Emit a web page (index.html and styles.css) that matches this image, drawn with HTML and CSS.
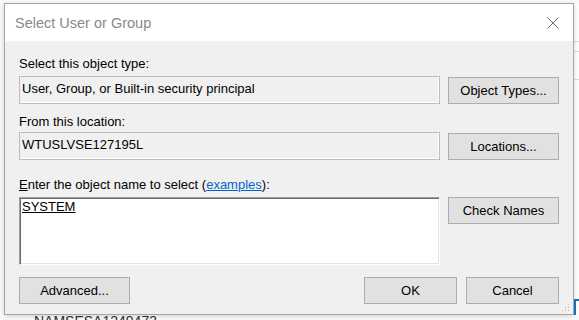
FILE: index.html
```html
<!DOCTYPE html>
<html lang="en">
<head>
    <meta charset="UTF-8">
    <title>Select User or Group</title>
    <link rel="stylesheet" href="styles.css">
</head>
<body>
    <div class="desktop">
        <div class="dialog">
            <div class="titlebar">
                <span class="title">Select User or Group</span>
                <svg class="close" viewBox="0 0 12 12" width="12" height="12">
                    <path d="M0.5 0.5 L11.5 11.5 M11.5 0.5 L0.5 11.5" stroke="#6e6e6e" stroke-width="1" fill="none"/>
                </svg>
            </div>
            <div class="content">
                <div class="label label-first">Select this object type:</div>
                <div class="row">
                    <div class="field">User, Group, or Built-in security principal</div>
                    <button class="btn">Object Types...</button>
                </div>

                <div class="label label-second">From this location:</div>
                <div class="row">
                    <div class="field">WTUSLVSE127195L</div>
                    <button class="btn">Locations...</button>
                </div>

                <div class="label label-third"><u>E</u>nter the object name to select (<a href="#">examples</a>):</div>
                <div class="row row-top">
                    <div class="names"><u>SYSTEM</u></div>
                    <button class="btn">Check Names</button>
                </div>

                <div class="footer">
                    <button class="btn">Advanced...</button>
                    <div class="footer-right">
                        <button class="btn btn-small">OK</button>
                        <button class="btn btn-small">Cancel</button>
                    </div>
                </div>
            </div>
            <svg class="grip" viewBox="0 0 8 8" width="8" height="8">
                <rect x="6" y="0" width="1" height="1" fill="#b8b8b8"/>
                <rect x="3" y="3" width="1" height="1" fill="#b8b8b8"/>
                <rect x="6" y="3" width="1" height="1" fill="#b8b8b8"/>
                <rect x="0" y="6" width="1" height="1" fill="#b8b8b8"/>
                <rect x="3" y="6" width="1" height="1" fill="#b8b8b8"/>
                <rect x="6" y="6" width="1" height="1" fill="#b8b8b8"/>
            </svg>
        </div>
        <div class="side">
            <div class="side-line side-line-a"></div>
            <div class="side-line side-line-b"></div>
            <div class="side-line side-line-c"></div>
            <div class="side-blue"></div>
        </div>
    </div>
    <div class="under">NAMSESA1249473</div>
</body>
</html>
```

FILE: styles.css
```css
body {
    margin: 0;
    padding: 3px 0 0 0;
    background: #fafafa;
    font-family: "Liberation Sans", Arial, sans-serif;
    font-size: 13px;
    color: #000;
    overflow: hidden;
    height: 320px;
    box-sizing: border-box;
}
.desktop {
    display: flex;
    padding-left: 4px;
}
.dialog {
    position: relative;
    width: 570px;
    height: 312px;
    box-sizing: border-box;
    border: 1px solid #a6a6a6;
    background: #f0f0f0;
    box-shadow: 0 1px 5px rgba(0, 0, 0, 0.18);
    z-index: 1;
}
.titlebar {
    height: 37px;
    background: #fff;
    display: flex;
    align-items: center;
    justify-content: space-between;
    padding: 0 14px 0 10px;
}
.title {
    font-size: 14.5px;
    color: #8a8a8a;
    letter-spacing: 0;
}
.close {
    display: block;
    margin-top: 1px;
}
.content {
    padding: 15px 14px 9px 14px;
}
.label {
    line-height: 16px;
    white-space: nowrap;
}
.label-first {
    margin-bottom: 4px;
}
.label-second {
    margin-top: 10px;
    margin-bottom: 2px;
}
.label-third {
    margin-top: 17px;
    margin-bottom: 4px;
}
.label a {
    color: #0066cc;
}
.row {
    display: grid;
    grid-template-columns: 421px 111px;
    column-gap: 8px;
    align-items: end;
}
.row-top {
    align-items: start;
}
.field {
    height: 28px;
    box-sizing: border-box;
    border: 1px solid #bcbcbc;
    box-shadow: inset -1px -1px 0 #fff;
    padding: 0 2px;
    line-height: 24px;
    white-space: nowrap;
}
.names {
    height: 68px;
    box-sizing: border-box;
    background: #fff;
    border-top: 1px solid #a0a0a0;
    border-left: 1px solid #a0a0a0;
    border-right: 1px solid #fff;
    border-bottom: 1px solid #fff;
    box-shadow: inset 1px 1px 0 #696969, inset -1px -1px 0 #e3e3e3;
    padding: 1px 2px;
    line-height: 16px;
}
.btn {
    height: 27px;
    box-sizing: border-box;
    border: 1px solid #adadad;
    background: #e1e1e1;
    font-family: inherit;
    font-size: 13px;
    color: #000;
    padding: 0;
    width: 111px;
}
.footer {
    margin-top: 12px;
    display: flex;
    justify-content: space-between;
}
.footer-right {
    display: flex;
    gap: 9px;
}
.btn-small {
    width: 93px;
}
.grip {
    position: absolute;
    right: 3px;
    bottom: 2px;
}
.side {
    flex: 1;
    height: 312px;
    display: flex;
    flex-direction: column;
    background: #fff;
}
.side-line {
    border-top: 1px solid #dcdcdc;
}
.side-line-a {
    margin-top: 38px;
}
.side-line-b {
    margin-top: 9px;
}
.side-line-c {
    margin-top: 27px;
}
.side-blue {
    margin-top: auto;
    margin-bottom: 0;
    height: 14px;
    border-left: 2px solid #1a73c8;
    border-top: 2px solid #1a73c8;
}
.under {
    margin-top: -2px;
    padding-left: 34px;
    font-size: 14px;
    line-height: 16px;
    color: #333;
}
```
